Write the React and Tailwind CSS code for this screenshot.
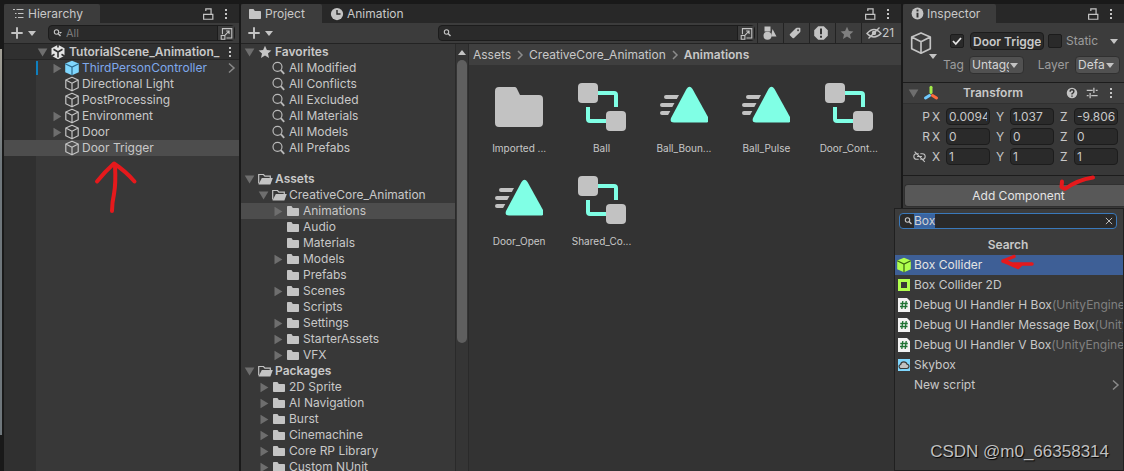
import React, { useState } from "react";
import clsx from "clsx";

const favorites = ["All Modified", "All Conflicts", "All Excluded", "All Materials", "All Models", "All Prefabs"];

const assetTree = [
  { name: "Assets", level: 0, root: true, open: true },
  { name: "CreativeCore_Animation", level: 1, open: true },
  { name: "Animations", level: 2, arrow: true, selected: true },
  { name: "Audio", level: 2 },
  { name: "Materials", level: 2 },
  { name: "Models", level: 2, arrow: true },
  { name: "Prefabs", level: 2 },
  { name: "Scenes", level: 2, arrow: true },
  { name: "Scripts", level: 2 },
  { name: "Settings", level: 2, arrow: true },
  { name: "StarterAssets", level: 2, arrow: true },
  { name: "VFX", level: 2, arrow: true },
  { name: "Packages", level: 0, root: true, open: true },
  { name: "2D Sprite", level: 1, arrow: true },
  { name: "AI Navigation", level: 1, arrow: true },
  { name: "Burst", level: 1, arrow: true },
  { name: "Cinemachine", level: 1, arrow: true },
  { name: "Core RP Library", level: 1, arrow: true },
  { name: "Custom NUnit", level: 1, arrow: true },
];

const hierarchy = [
  { name: "ThirdPersonController", arrow: true, prefab: true },
  { name: "Directional Light" },
  { name: "PostProcessing" },
  { name: "Environment", arrow: true },
  { name: "Door", arrow: true },
  { name: "Door Trigger", selected: true },
];

const files = [
  { name: "Imported ...", type: "folder" },
  { name: "Ball", type: "controller" },
  { name: "Ball_Boun...", type: "clip" },
  { name: "Ball_Pulse", type: "clip" },
  { name: "Door_Cont...", type: "controller" },
  { name: "Door_Open", type: "clip" },
  { name: "Shared_Co...", type: "controller" },
];

const results = [
  { name: "Box Collider", icon: "box" },
  { name: "Box Collider 2D", icon: "box2d" },
  { name: "Debug UI Handler H Box", icon: "script", ns: "(UnityEngine" },
  { name: "Debug UI Handler Message Box", icon: "script", ns: "(Unity" },
  { name: "Debug UI Handler V Box", icon: "script", ns: "(UnityEngine." },
  { name: "Skybox", icon: "skybox" },
  { name: "New script", more: true },
];

const transform = [
  { label: "P", values: ["0.0094", "1.037", "-9.806"] },
  { label: "R", values: ["0", "0", "0"] },
  { label: "S", values: ["1", "1", "1"], unlinked: true },
];

const indents = ["pl-0.5", "pl-4", "pl-[30px]"];

function Svg({ size = 16, className, children }) {
  return (
    <svg width={size} height={size} viewBox="0 0 16 16" fill="none" className={clsx("shrink-0", className)} aria-hidden="true">
      {children}
    </svg>
  );
}

function Foldout({ open }) {
  return (
    <Svg size={14} className="text-[#6e6e6e]">
      <path d={open ? "M2 4h11L7.500 13z" : "M4 3v11l9-5.500z"} fill="currentColor" />
    </Svg>
  );
}

function Caret({ className }) {
  return (
    <svg width="8" height="5" viewBox="0 0 8 5" className={clsx("shrink-0", className)} aria-hidden="true">
      <path d="M0 0h8L4 5z" fill="#c4c4c4" />
    </svg>
  );
}

function CubeOutline({ size, thin }) {
  return (
    <Svg size={size}>
      <path
        d="M8 1.300 14.200 4v7.800L8 14.800 1.800 11.800V4zM1.800 4 8 7.200 14.200 4M8 7.200v7.600"
        stroke="#c4c4c4"
        strokeWidth={thin ? 1.1 : 1.2}
        strokeLinejoin="round"
      />
    </Svg>
  );
}

function CubeSolid({ color, line }) {
  return (
    <Svg>
      <path d="M8 .8 14.800 3.500v8.700L8 15.200l-6.800-3V3.500z" fill={color} />
      <path d="M1.200 3.800 8 7l6.800-3.200M8 7v8.200" stroke={line} strokeWidth="1.200" />
    </Svg>
  );
}

function Folder({ open }) {
  return (
    <Svg>
      {open ? (
        <>
          <path d="M1.700 12.500V3.500h4.800l1.400 1.600h5.400v2" stroke="#c4c4c4" strokeWidth="1.200" />
          <path d="M4.800 7h11l-2.400 6.500H1.500z" fill="#c4c4c4" />
        </>
      ) : (
        <path d="M2 3.800q0-.8.8-.8h3.700l1.300 2h5.400q.8 0 .8.800v6.400q0 .8-.8.800H2.800q-.8 0-.8-.8z" fill="#c4c4c4" />
      )}
    </Svg>
  );
}

function Magnifier({ caret }) {
  return (
    <svg width="12" height="10" viewBox="0 0 12 10" fill="none" className="shrink-0" aria-hidden="true">
      <circle cx="3.500" cy="4" r="2.200" stroke="#c4c4c4" strokeWidth="1.100" />
      <path d="M5 5.500 7.500 8" stroke="#c4c4c4" strokeWidth="1.400" />
      {caret && <path d="M6 4h3L7.500 5.800z" fill="#c4c4c4" />}
    </svg>
  );
}

function BigMagnifier() {
  return (
    <Svg>
      <circle cx="6.500" cy="6.800" r="4.500" stroke="#b8b8b8" strokeWidth="1.200" />
      <path d="m9.800 10.200 3.400 3.600" stroke="#b8b8b8" strokeWidth="1.900" />
    </Svg>
  );
}

function Star({ color }) {
  return (
    <Svg>
      <path d="m8 1.800 1.900 4.100 4.500.5L11 9.400l1 4.500-4-2.300-4 2.300 1-4.500L1.600 6.400l4.500-.5z" fill={color} />
    </Svg>
  );
}

function WindowButtons() {
  return (
    <div className="ml-auto flex items-center gap-1 pr-1.5">
      <button aria-label="Lock">
        <Svg size={14}>
          <path d="M3 8.500h10.500V14H3zM5.500 4.500V2.200h6v6.300" stroke="#c4c4c4" strokeWidth="1.400" />
        </Svg>
      </button>
      <button aria-label="Options" className="px-0.5">
        <Dots />
      </button>
    </div>
  );
}

function Dots() {
  return (
    <svg width="10" height="12" viewBox="0 0 10 12" className="shrink-0" aria-hidden="true">
      <path d="M4 1h2v2H4zM4 5h2v2H4zM4 9h2v2H4z" fill="#c4c4c4" />
    </svg>
  );
}

function Tab({ active, icon, children, className }) {
  return (
    <button
      role="tab"
      aria-selected={active}
      className={clsx("flex items-center gap-0.5 pl-1.5", active && "rounded-t-xs bg-[#3c3c3c]", className)}
    >
      {icon}
      {children}
    </button>
  );
}

function AddMenuButton() {
  return (
    <button aria-label="Create" className="flex items-center gap-1 pl-1.5">
      <Svg size={14}>
        <path d="M8 1.500v13M1.500 8h13" stroke="#c4c4c4" strokeWidth="2.200" />
      </Svg>
      <Caret />
    </button>
  );
}

function SearchField({ label, placeholder, className, caret }) {
  return (
    <div className={clsx("flex h-4 min-w-0 flex-1 items-center rounded-sm border border-[#1c1c1c] bg-[#2a2a2a]", className)}>
      <span className="pl-1">
        <Magnifier caret={caret} />
      </span>
      <input
        aria-label={label}
        placeholder={placeholder}
        className="h-3.5 min-w-0 flex-1 bg-transparent px-px text-[11px] outline-none placeholder:text-[#7a7a7a]"
      />
      <button aria-label="Open search window" className="flex h-3.5 w-[17px] items-center justify-center border-l border-[#1c1c1c] bg-[#3c3c3c]">
        <Svg size={13}>
          <path d="M3 9V2h11.500v11.500H8" stroke="#c4c4c4" strokeWidth="1.300" />
          <path d="M1.500 10.500h4.500V15H1.500zM6 10.200l5-5M7.500 5h3.700v3.700" stroke="#c4c4c4" strokeWidth="1.300" />
        </Svg>
      </button>
    </div>
  );
}

function Hierarchy() {
  return (
    <section className="flex w-[235px] shrink-0 flex-col bg-[#383838]">
      <div role="tablist" className="flex h-[19px] bg-[#282828]">
        <Tab
          active
          className="w-24"
          icon={
            <Svg>
              <path d="M3 3.500h2M6.500 3.500h7M5 7.500h1.500M8 7.500h5.500M5 11.500h1.500M8 11.500h5.500" stroke="#c4c4c4" strokeWidth="1.200" />
            </Svg>
          }
        >
          Hierarchy
        </Tab>
        <WindowButtons />
      </div>
      <div className="flex h-[21px] items-center gap-3 border-b border-[#232323] bg-[#3c3c3c] pr-1">
        <AddMenuButton />
        <SearchField label="Search hierarchy" placeholder="All" caret />
      </div>
      <div className="flex h-4 items-center border-b border-[#252525] bg-[#303030] pr-1 pl-8 font-semibold">
        <Foldout open />
        <Svg className="mr-[3px]">
          <path d="M8 .8 14.500 4.300v7.400L8 15.200 1.500 11.700V4.300z" fill="#e4e4e4" />
          <path d="M8 8v5.500M8 8 3.500 5.200M8 8l4.500-2.800M8 0v3.500M1 12.500 4.500 10.300M15 12.500l-3.500-2.200" stroke="#303030" strokeWidth="1.600" />
        </Svg>
        <span className="min-w-0 flex-1 whitespace-nowrap">TutorialScene_Animation_</span>
        <button aria-label="Scene options">
          <Dots />
        </button>
      </div>
      <ul className="flex-1 border-l-[32px] border-[#303030]">
        {hierarchy.map((item) => (
          <li
            key={item.name}
            className={clsx(
              "-ml-8 flex h-4 items-center gap-0.5 pl-8",
              item.selected && "bg-[#4d4d4d]",
              item.prefab && "text-[#7fa9ec]"
            )}
          >
            <span className={clsx("flex h-3.5 w-[26px] border-l-2 pl-3", item.prefab ? "border-[#0f7fbe]" : "border-transparent")}>
              {item.arrow && <Foldout />}
            </span>
            {item.prefab ? <CubeSolid color="#7fd6fd" line="#2b6a8f" /> : <CubeOutline />}
            {item.name}
            {item.prefab && (
              <Svg className="ml-auto">
                <path d="m6 3.500 5 4.500-5 4.500" stroke="#8a8a8a" strokeWidth="1.500" />
              </Svg>
            )}
          </li>
        ))}
      </ul>
    </section>
  );
}

function TreeRow({ item, icon }) {
  return (
    <li
      className={clsx(
        "flex h-4 items-center whitespace-nowrap",
        indents[item.level],
        item.root && "font-semibold",
        item.selected && "bg-[#4d4d4d]"
      )}
    >
      <span className="w-3.5">{(item.arrow || item.open) && <Foldout open={item.open} />}</span>
      <span className="mr-0.5">{icon}</span>
      {item.name}
    </li>
  );
}

function FileIcon({ type }) {
  return (
    <svg width="48" height="48" viewBox="0 0 48 48" fill="none" aria-hidden="true">
      {type === "folder" && (
        <path d="M0 8q0-4 4-4h15.500q1.500 0 2.200 1.300L25 12h19q4 0 4 4v24q0 4-4 4H4q-4 0-4-4z" fill="#c2c2c2" />
      )}
      {type === "controller" && (
        <>
          <path d="M20 10h16q2 0 2 2v12M10 24v12q0 2 2 2h16" stroke="#80ffe5" strokeWidth="4" />
          <rect width="20" height="20" rx="4" fill="#c2c2c2" />
          <rect x="28" y="28" width="20" height="20" rx="4" fill="#c2c2c2" />
        </>
      )}
      {type === "clip" && (
        <>
          <path d="M26.500 6q3-4.500 6 0l16 29q1.500 4.500-3 4.500H14q-4.500 0-3-4.500z" fill="#80ffe5" />
          <path
            d="M6 12h13l-2.200 4H6q-2 0-2-2t2-2zM2 20h12.500l-2.200 4H2q-2 0-2-2t2-2zM2 28h8.300l-2.200 4H2q-2 0-2-2t2-2z"
            fill="#c2c2c2"
          />
        </>
      )}
    </svg>
  );
}

function Project() {
  return (
    <section className="flex min-w-0 flex-1 flex-col bg-[#383838]">
      <div role="tablist" className="flex h-[19px] bg-[#282828]">
        <Tab active className="w-[81px]" icon={<Folder />}>
          Project
        </Tab>
        <Tab
          className="gap-[3px] pl-2"
          icon={
            <Svg size={14}>
              <circle cx="8" cy="8" r="7" fill="#c4c4c4" />
              <path d="M8 3.500V8h4" stroke="#282828" strokeWidth="1.600" />
            </Svg>
          }
        >
          Animation
        </Tab>
        <WindowButtons />
      </div>
      <div className="flex h-[21px] items-center border-b border-[#232323] bg-[#3c3c3c]">
        <div className="w-[197px]">
          <AddMenuButton />
        </div>
        <SearchField label="Search project" className="mr-0.5" />
        <button aria-label="Search by type" className="flex h-5 w-[26px] items-center border-l border-[#232323] pl-[3px]">
          <Svg>
            <path d="M3.500 1.500h6v5h-6zM11.500 4l4 7.500h-5.500z" fill="#c4c4c4" />
            <circle cx="6.500" cy="10.800" r="4" fill="#c4c4c4" />
          </Svg>
        </button>
        <button aria-label="Search by label" className="flex h-5 w-[26px] items-center border-l border-[#232323] pl-[3px]">
          <Svg>
            <path
              d="M8.800 3.200q.4-.4 1-.4l2.800-.1q.8 0 .8.800v2.800q0 .6-.4 1l-6 5.700q-.7.700-1.400 0L3 10.500q-.7-.7 0-1.400zM11 4.300a.9.900 0 1 0 .1 0z"
              fill="#c4c4c4"
              fillRule="evenodd"
            />
          </Svg>
        </button>
        <button aria-label="Search by import log" className="flex h-5 w-[26px] items-center border-l border-[#232323] pl-[3px]">
          <Svg>
            <path d="M5.200 1.200h5.600l4 4v5.600l-4 4H5.200l-4-4V5.200z" fill="#c4c4c4" />
            <path d="M8 3.500v5.700M8 10.800v2" stroke="#333" strokeWidth="2" />
          </Svg>
        </button>
        <button aria-label="Save search" className="flex h-5 w-[26px] items-center border-l border-[#232323] pl-[3px]">
          <Star color="#808080" />
        </button>
        <button className="flex h-5 w-10 items-center border-l border-[#232323] pl-1">
          <Svg>
            <path d="M1 8.500q7-8 14 0-7 7-14 0zM2.500 13.500l11-11" stroke="#c4c4c4" strokeWidth="1.400" />
            <circle cx="8" cy="8" r="2.200" fill="#c4c4c4" />
          </Svg>
          21
        </button>
      </div>
      <div className="flex min-h-0 flex-1">
        <div className="w-[214px] shrink-0 overflow-hidden">
          <ul>
            <TreeRow item={{ name: "Favorites", level: 0, root: true, open: true }} icon={<Star color="#c4c4c4" />} />
            {favorites.map((name) => (
              <TreeRow key={name} item={{ name, level: 1 }} icon={<BigMagnifier />} />
            ))}
          </ul>
          <ul className="mt-[15px]">
            {assetTree.map((item) => (
              <TreeRow key={item.name} item={item} icon={<Folder open={item.open} />} />
            ))}
          </ul>
        </div>
        <div className="flex w-3.5 shrink-0 flex-col items-center border-x border-[#2a2a2a] bg-[#353535]">
          <button aria-label="Scroll up" className="flex h-4 items-center">
            <Caret className="rotate-180" />
          </button>
          <div className="h-[283px] w-2.5 rounded-full bg-[#5f5f5f]" />
        </div>
        <div className="min-w-0 flex-1 bg-[#333333]">
          <nav className="flex h-[21px] items-center gap-[5px] bg-[#3f3f3f] pl-1">
            <a href="#assets">Assets</a>
            <BreadcrumbArrow />
            <a href="#creative-core">CreativeCore_Animation</a>
            <BreadcrumbArrow />
            <span className="font-semibold">Animations</span>
          </nav>
          <div className="grid grid-cols-5 gap-y-5 pt-[18px] pr-[11px] pl-[9px]">
            {files.map((file) => (
              <figure key={file.name} className="flex flex-col items-center gap-2.5">
                <FileIcon type={file.type} />
                <figcaption className="text-[10px] leading-[15px]">{file.name}</figcaption>
              </figure>
            ))}
          </div>
        </div>
      </div>
    </section>
  );
}

function BreadcrumbArrow() {
  return (
    <svg width="8" height="10" viewBox="0 0 8 10" fill="none" className="shrink-0" aria-hidden="true">
      <path d="m2 1 4 4-4 4" stroke="#8c8c8c" strokeWidth="1.500" />
    </svg>
  );
}

function Check({ label, defaultChecked }) {
  return (
    <span className="relative flex shrink-0">
      <input
        type="checkbox"
        aria-label={label}
        defaultChecked={defaultChecked}
        className="peer h-3.5 w-3.5 appearance-none rounded-xs border border-[#1c1c1c] bg-[#2a2a2a]"
      />
      <svg viewBox="0 0 14 14" className="pointer-events-none absolute inset-0 hidden peer-checked:block" fill="none" aria-hidden="true">
        <path d="m3 7 2.800 3L11 4" stroke="#e4e4e4" strokeWidth="1.800" />
      </svg>
    </span>
  );
}

function Dropdown({ id, value, className }) {
  return (
    <span className={clsx("relative flex", className)}>
      <select id={id} className="h-[18px] w-full appearance-none rounded-sm border border-[#303030] bg-[#515151] pr-3.5 pl-0.5 leading-4 outline-none">
        <option>{value}</option>
      </select>
      <Caret className="pointer-events-none absolute top-[7px] right-1.5" />
    </span>
  );
}

function Inspector() {
  return (
    <section className="flex w-[221px] shrink-0 flex-col bg-[#383838]">
      <div role="tablist" className="flex h-[19px] bg-[#282828]">
        <Tab
          active
          className="w-[93px] gap-[3px] pl-2"
          icon={
            <Svg size={13}>
              <circle cx="8" cy="8" r="7.300" fill="#c4c4c4" />
              <path d="M8 3v2.500M8 7v6" stroke="#333" strokeWidth="2.400" />
            </Svg>
          }
        >
          Inspector
        </Tab>
        <WindowButtons />
      </div>
      <div className="flex h-[60px] border-b border-[#1c1c1c] bg-[#3c3c3c]">
        <div className="relative w-10 pt-2 pl-1.5">
          <CubeOutline size={24} thin />
          <Caret className="absolute top-[31px] left-[26px]" />
        </div>
        <div className="flex-1 pt-[9px]">
          <div className="flex h-[18px] items-center pl-[7px]">
            <Check label="Active" defaultChecked />
            <input
              aria-label="Name"
              defaultValue="Door Trigger"
              className="mx-1 ml-1.5 h-[18px] w-[74px] rounded-sm border border-[#1c1c1c] bg-[#2a2a2a] px-0.5 font-semibold outline-none"
            />
            <Check label="Static" />
            <span className="ml-1 text-[#9c9c9c]">Static</span>
            <Caret className="mr-1.5 ml-auto" />
          </div>
          <div className="mt-1.5 flex h-[18px] items-center pr-1 text-[#9c9c9c]">
            <label htmlFor="tag" className="w-[26px]">
              Tag
            </label>
            <Dropdown id="tag" value="Untagged" className="w-[55px] text-[#d4d4d4]" />
            <label htmlFor="layer" className="mr-1.5 ml-auto">
              Layer
            </label>
            <Dropdown id="layer" value="Default" className="w-[45px] text-[#d4d4d4]" />
          </div>
        </div>
      </div>
      <div className="flex h-[21px] items-center border-b border-[#303030] bg-[#3e3e3e] pr-2 pl-1">
        <Foldout open />
        <Svg className="mr-6 ml-0.5">
          <path d="M8 7.500V2.200" stroke="#a3ec4a" strokeWidth="3" strokeLinecap="round" />
          <path d="m6.500 10.500-4 2.500" stroke="#6fc9ff" strokeWidth="3" strokeLinecap="round" />
          <path d="m9.500 10.500 4 2.500" stroke="#ff6a3c" strokeWidth="3" strokeLinecap="round" />
        </Svg>
        <span className="font-semibold">Transform</span>
        <div className="ml-auto flex items-center gap-2">
          <button aria-label="Help">
            <Svg size={12}>
              <circle cx="8" cy="8" r="7" fill="#c4c4c4" />
              <path d="M5.500 6.200q0-2.500 2.500-2.500t2.500 2.300Q10.500 7.500 8 9v1M8 11.200v1.800" stroke="#333" strokeWidth="1.900" />
            </Svg>
          </button>
          <button aria-label="Presets">
            <Svg size={12}>
              <path d="M1 4.500h8M13 4.500h2.500M10.500 1v7M1 11.500h2.500M7 11.500h8.500M5.500 8v7" stroke="#c4c4c4" strokeWidth="1.700" />
            </Svg>
          </button>
          <button aria-label="Transform options">
            <Dots />
          </button>
        </div>
      </div>
      <div className="flex flex-col gap-[3px] border-b border-[#1c1c1c] py-1 pr-[5px] pb-2.5">
        {transform.map((row) => (
          <div key={row.label} className="flex h-[17px] items-center">
            <span className="flex w-[29px] items-center justify-end pr-0.5">
              {row.unlinked ? (
                <span className="mr-1">
                  <Svg size={13}>
                    <path
                      d="M7 4.500H4.500a3.500 3.500 0 0 0 0 7H7M9 4.500h2.500a3.500 3.500 0 0 1 0 7H9M5 8h6M2 2l12.500 12.500"
                      stroke="#c4c4c4"
                      strokeWidth="1.300"
                    />
                  </Svg>
                </span>
              ) : (
                row.label
              )}
            </span>
            {row.values.map((value, i) => (
              <label key={i} className={clsx("flex items-center", i > 0 && "ml-1.5")}>
                <span className="w-3.5">{"XYZ"[i]}</span>
                <input
                  defaultValue={value}
                  className="h-[17px] w-11 rounded-sm border border-[#1c1c1c] bg-[#2a2a2a] px-0.5 outline-none"
                />
              </label>
            ))}
          </div>
        ))}
      </div>
      <button className="mt-2 ml-px h-[23px] rounded-l-sm border border-r-0 border-[#303030] bg-[#585858] pl-2 text-[#e4e4e4]">
        Add Component
      </button>
    </section>
  );
}

function ResultIcon({ type }) {
  if (type === "box") return <CubeSolid color="#b0ff4d" line="#3a6410" />;
  return (
    <Svg>
      {type === "box2d" && <path d="M2 2h12v12H2zM5 5v6h6V5z" fill="#b0ff4d" fillRule="evenodd" />}
      {type === "script" && (
        <>
          <path d="M2 1h9l3 3v11H2z" fill="#f2f2f2" />
          <path d="M6.800 4 5.800 12M10.200 4l-1 8M4.300 6.500h7.500M4 9.500h7.500" stroke="#1e7333" strokeWidth="1.300" />
        </>
      )}
      {type === "skybox" && (
        <>
          <path d="M2 2h12v12H2z" fill="#7fd6fd" />
          <path
            d="M5.500 11.500a2 2 0 0 1-.8-4Q5 4.800 7.800 4.800q2.500 0 3.200 2.300 2 .3 2 2.200t-2 2.200z"
            fill="#c2c2c2"
            stroke="#3a3a3a"
            strokeWidth="1.200"
          />
        </>
      )}
    </Svg>
  );
}

function AddComponentMenu() {
  const [query, setQuery] = useState("Box");

  return (
    <div className="absolute top-[208px] right-0 bottom-0 w-[230px] overflow-hidden border border-[#202020] bg-[#383838]">
      <div className="bg-[#3c3c3c] pr-0.5">
        <div className="px-1 pt-1">
          <div className="flex h-4 items-center rounded-sm border border-[#3a79bb] bg-[#2a2a2a] pl-1">
            <Magnifier />
            <input
              autoFocus
              onFocus={(e) => e.target.select()}
              aria-label="Search components"
              value={query}
              onChange={(e) => setQuery(e.target.value)}
              className="-ml-0.5 h-3.5 min-w-0 flex-1 bg-transparent text-xs leading-3.5 outline-none selection:bg-[#3a64a0] selection:text-[#d2d2d2]"
            />
            <button aria-label="Clear" onClick={() => setQuery("")} className="pr-0.5">
              <Svg size={10}>
                <path d="m3 3 10 10M13 3 3 13" stroke="#c4c4c4" strokeWidth="1.500" />
              </Svg>
            </button>
          </div>
        </div>
        <h2 className="pt-2 pb-0.5 text-center leading-4 font-semibold">Search</h2>
      </div>
      <ul>
        {results.map((item, i) => (
          <li key={item.name}>
            <button
              className={clsx("flex h-5 w-full items-center gap-0.5 pl-px text-left whitespace-nowrap", i === 0 && "bg-[#3e5f96] text-[#e4e4e4]")}
            >
              <ResultIcon type={item.icon} />
              <span>
                {item.name}
                <span className="text-[#808080]">{item.ns}</span>
              </span>
              {item.more && (
                <Svg className="ml-auto">
                  <path d="m6 3.500 5 4.500-5 4.500" stroke="#8a8a8a" strokeWidth="1.500" />
                </Svg>
              )}
            </button>
          </li>
        ))}
      </ul>
      <p className="mt-[45px] mr-3.5 text-right font-['Liberation_Sans',sans-serif] text-[17px] leading-6 text-[#c0c0c0] text-shadow-[1px_1px_1px_#000]">
        CSDN @m0_66358314
      </p>
    </div>
  );
}

function PenMarks() {
  return (
    <svg className="pointer-events-none absolute inset-0 h-full w-full" fill="none" stroke="#e5191c" strokeLinecap="round" strokeLinejoin="round" aria-hidden="true">
      <path d="M97 181.500q8-10 17-18 12 8 20.500 18M115 166q1 17-1 28-2 9-2 17" strokeWidth="4" />
      <path d="M1062 181.500l-.500 5.500 3.500 2q12-9 28-11.500" strokeWidth="4" />
      <path d="M1032 264h-20l-9-3 11-4.500M1003 261l15 6.500 3-3" strokeWidth="3.500" />
    </svg>
  );
}

export default function App() {
  return (
    <div className="relative flex h-screen gap-0.5 overflow-hidden bg-[#191919] pt-1 font-[Inter,sans-serif] text-xs leading-4 text-[#c8c8c8]">
      <div className="mt-[45px] mb-9 w-0.5 shrink-0 bg-linear-to-b from-[#a3a096] to-[#6f777c] to-30%" />
      <Hierarchy />
      <Project />
      <Inspector />
      <AddComponentMenu />
      <PenMarks />
    </div>
  );
}
